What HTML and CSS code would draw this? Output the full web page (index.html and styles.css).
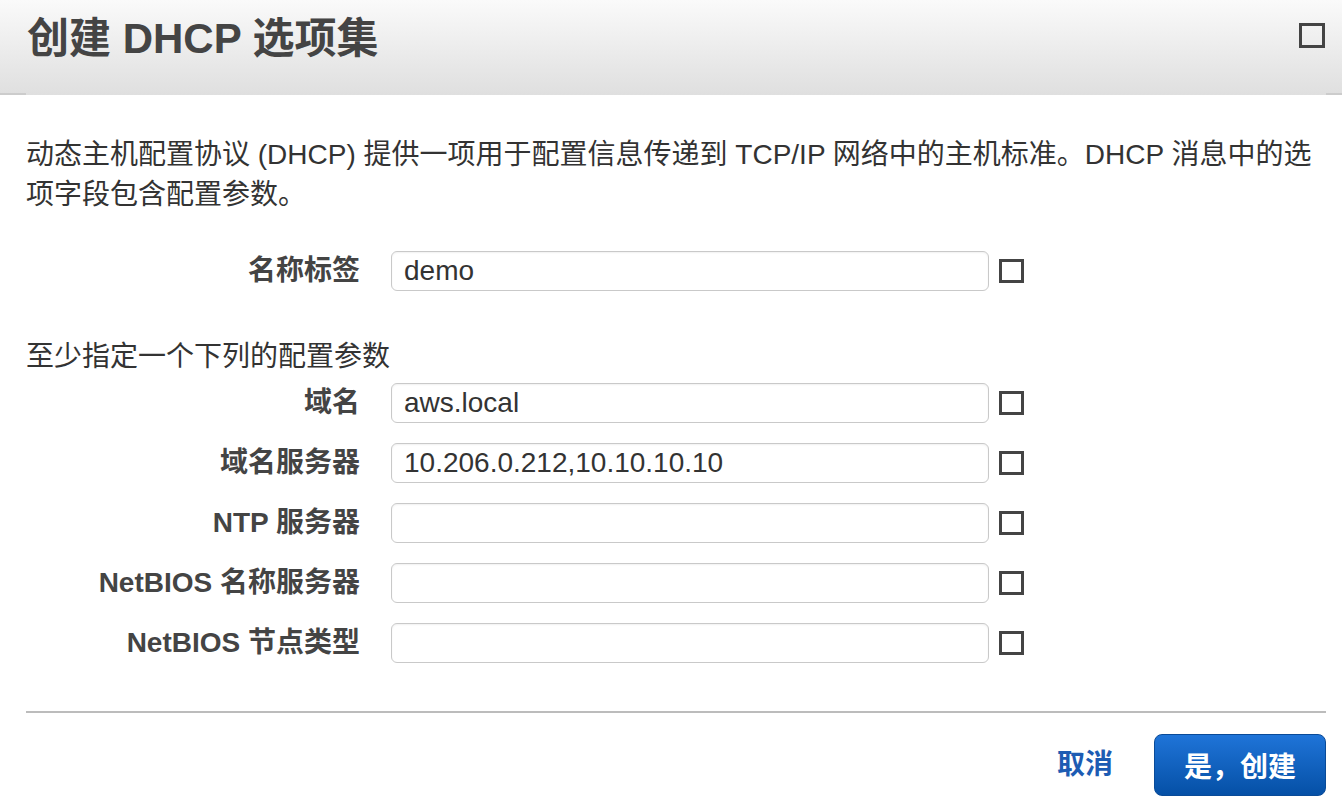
FILE: index.html
```html
<!DOCTYPE html>
<html lang="zh-CN">
<head>
<meta charset="utf-8">
<title>创建 DHCP 选项集</title>
<link rel="stylesheet" href="styles.css">
</head>
<body>
<div class="dialog">
  <header class="header">
    <h1 class="title">创建 DHCP 选项集</h1>
    <span class="close-box" aria-label="关闭"></span>
  </header>
  <main class="content">
    <p class="desc">动态主机配置协议 (DHCP) 提供一项用于配置信息传递到 TCP/IP 网络中的主机标准。DHCP 消息中的选项字段包含配置参数。</p>
    <div class="form">
      <label class="label">名称标签</label>
      <input class="field" type="text" value="demo">
      <span class="box"></span>
    </div>
    <div class="section">至少指定一个下列的配置参数</div>
    <div class="form">
      <label class="label">域名</label>
      <input class="field" type="text" value="aws.local">
      <span class="box"></span>

      <label class="label">域名服务器</label>
      <input class="field" type="text" value="10.206.0.212,10.10.10.10">
      <span class="box"></span>

      <label class="label">NTP 服务器</label>
      <input class="field" type="text" value="">
      <span class="box"></span>

      <label class="label">NetBIOS 名称服务器</label>
      <input class="field" type="text" value="">
      <span class="box"></span>

      <label class="label">NetBIOS 节点类型</label>
      <input class="field" type="text" value="">
      <span class="box"></span>
    </div>
    <div class="divider"></div>
    <div class="actions">
      <a class="cancel" href="#">取消</a>
      <button class="primary" type="button">是，创建</button>
    </div>
  </main>
</div>
</body>
</html>
```
FILE: styles.css
```css
* { box-sizing: border-box; }
html, body {
  margin: 0;
  padding: 0;
  background: #fff;
}
body {
  font-family: "Liberation Sans", "Noto Sans CJK SC", sans-serif;
  color: #333;
  width: 1342px;
  height: 812px;
  overflow: hidden;
}
.header {
  height: 95px;
  display: flex;
  align-items: flex-start;
  justify-content: space-between;
  padding: 14px 17px 0 27px;
  background:
    linear-gradient(#cccccc, #cccccc) left bottom / 26px 2px no-repeat,
    linear-gradient(#cccccc, #cccccc) right bottom / 16px 2px no-repeat,
    linear-gradient(#fafafa, #dfdfdf);
}
.title {
  margin: 0;
  font-size: 42px;
  line-height: 50px;
  font-weight: bold;
  color: #444;
}
.close-box {
  display: block;
  width: 26px;
  height: 25px;
  margin-top: 9px;
  border: 3px solid #444;
}
.content {
  padding: 0 16px 0 26px;
}
.desc {
  margin: 40px 0 0 0;
  font-size: 28px;
  line-height: 40px;
  color: #333;
}
.form {
  display: grid;
  grid-template-columns: 334px 598px 24px;
  column-gap: 31px;
  row-gap: 20px;
  align-items: center;
}
.form:first-of-type { }
.desc + .form { margin-top: 36px; }
.form .box { margin-left: -21px; }
.label {
  text-align: right;
  font-size: 28px;
  font-weight: bold;
  color: #444;
  line-height: 40px;
  white-space: nowrap;
}
.field {
  height: 40px;
  width: 598px;
  border: 1px solid #c9c9c9;
  border-radius: 6px;
  padding: 0 12px;
  font-family: "Liberation Sans", "Noto Sans CJK SC", sans-serif;
  font-size: 28px;
  color: #333;
  background: #fff;
  box-shadow: inset 0 1px 2px rgba(0,0,0,0.06);
  outline: none;
}
.box {
  display: block;
  width: 25px;
  height: 24px;
  border: 3px solid #444;
}
.section {
  margin-top: 46px;
  margin-bottom: 6px;
  font-size: 28px;
  line-height: 40px;
  color: #333;
}
.divider {
  margin-top: 48px;
  height: 2px;
  background: #bcbcbc;
}
.actions {
  display: flex;
  justify-content: flex-end;
  align-items: center;
  gap: 41px;
  margin-top: 21px;
}
.cancel {
  font-size: 28px;
  font-weight: bold;
  color: #1d5cb3;
  text-decoration: none;
  line-height: 40px;
}
.primary {
  width: 172px;
  height: 62px;
  border: 1px solid #0a4b98;
  border-radius: 8px;
  background: linear-gradient(#1f74d8, #0550a6);
  color: #fff;
  font-family: "Liberation Sans", "Noto Sans CJK SC", sans-serif;
  font-size: 28px;
  font-weight: bold;
  padding: 0;
  cursor: pointer;
}
```
